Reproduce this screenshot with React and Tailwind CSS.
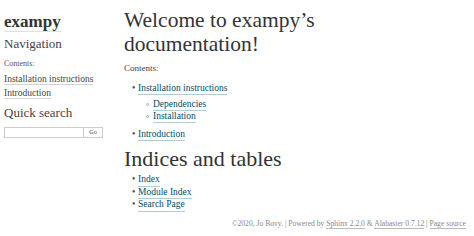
import React from "react";

const Link = ({ children }) => (
  <a href="#" className="text-[#004b6b] border-b border-[#b4cad6] no-underline">
    {children}
  </a>
);

const SideLink = ({ children }) => (
  <span className="border-b border-[#d4d4d4]">{children}</span>
);

const Bullet = () => <span className="w-[6px] text-[#3e4349]">•</span>;

const Circle = () => (
  <span className="w-[7px] flex items-center pb-[1px]">
    <span className="block w-[3px] h-[3px] rounded-full border border-[#9aa]"></span>
  </span>
);

export default function App() {
  return (
    <div className="w-[474px] h-[236px] bg-white text-[#3e4349] font-['Liberation_Serif',Georgia,serif] overflow-hidden relative">
      <div className="flex">
        {/* sidebar */}
        <div className="w-[120px] shrink-0 pl-[4px] pt-[13px] text-[#444]">
          <div className="text-[17px] font-bold leading-[18px] text-[#333]">
            <span className="border-b border-[#e0e0e0]">exampy</span>
          </div>
          <div className="text-[13px] leading-[16px] mt-[4.5px]">Navigation</div>
          <div className="text-[8px] leading-[10px] mt-[7.5px] text-[#555]">Contents:</div>
          <div className="mt-[3px] text-[9.5px] leading-[14px]">
            <div><SideLink>Installation instructions</SideLink></div>
            <div><SideLink>Introduction</SideLink></div>
          </div>
          <div className="text-[13px] leading-[16px] mt-[5px]">Quick search</div>
          <div className="flex mt-[6px] w-[99px] h-[11px]">
            <div className="flex-1 border border-[#ccc]"></div>
            <div className="w-[19px] border border-l-0 border-[#ccc] text-[6px] flex items-center justify-center text-[#333]">Go</div>
          </div>
        </div>
        {/* main */}
        <div className="pl-[4px] pt-[8px]">
          <h1 className="text-[21.5px] leading-[24px] text-[#333]">
            Welcome to exampy’s
            <br />
            documentation!
          </h1>
          <div className="text-[9px] leading-[10px] mt-[7px]">Contents:</div>
          <ul className="mt-[9px] ml-[8px] text-[9.5px] leading-[12px]">
            <li className="flex"><Bullet /><Link>Installation instructions</Link></li>
          </ul>
          <ul className="mt-[4px] ml-[22px] text-[9.5px] leading-[11px]">
            <li className="flex"><Circle /><Link>Dependencies</Link></li>
            <li className="flex"><Circle /><Link>Installation</Link></li>
          </ul>
          <ul className="mt-[5px] ml-[8px] text-[9.5px] leading-[12px]">
            <li className="flex"><Bullet /><Link>Introduction</Link></li>
          </ul>
          <h2 className="text-[22px] leading-[24px] mt-[6px] text-[#333]">Indices and tables</h2>
          <ul className="mt-[3px] ml-[8px] text-[9.5px] leading-[11.5px]">
            <li className="flex"><Bullet /><Link>Index</Link></li>
            <li className="flex"><Bullet /><Link>Module Index</Link></li>
            <li className="flex"><Bullet /><Link>Search Page</Link></li>
          </ul>
        </div>
      </div>
      <div className="absolute right-[8px] top-[219px] text-[7.6px] leading-[10px] text-[#888]">
        ©2020, Jo Bovy. | Powered by <span className="border-b border-[#bbb]">Sphinx 2.2.0</span> &amp; <span className="border-b border-[#bbb]">Alabaster 0.7.12</span> | <span className="border-b border-[#bbb]">Page source</span>
      </div>
    </div>
  );
}
